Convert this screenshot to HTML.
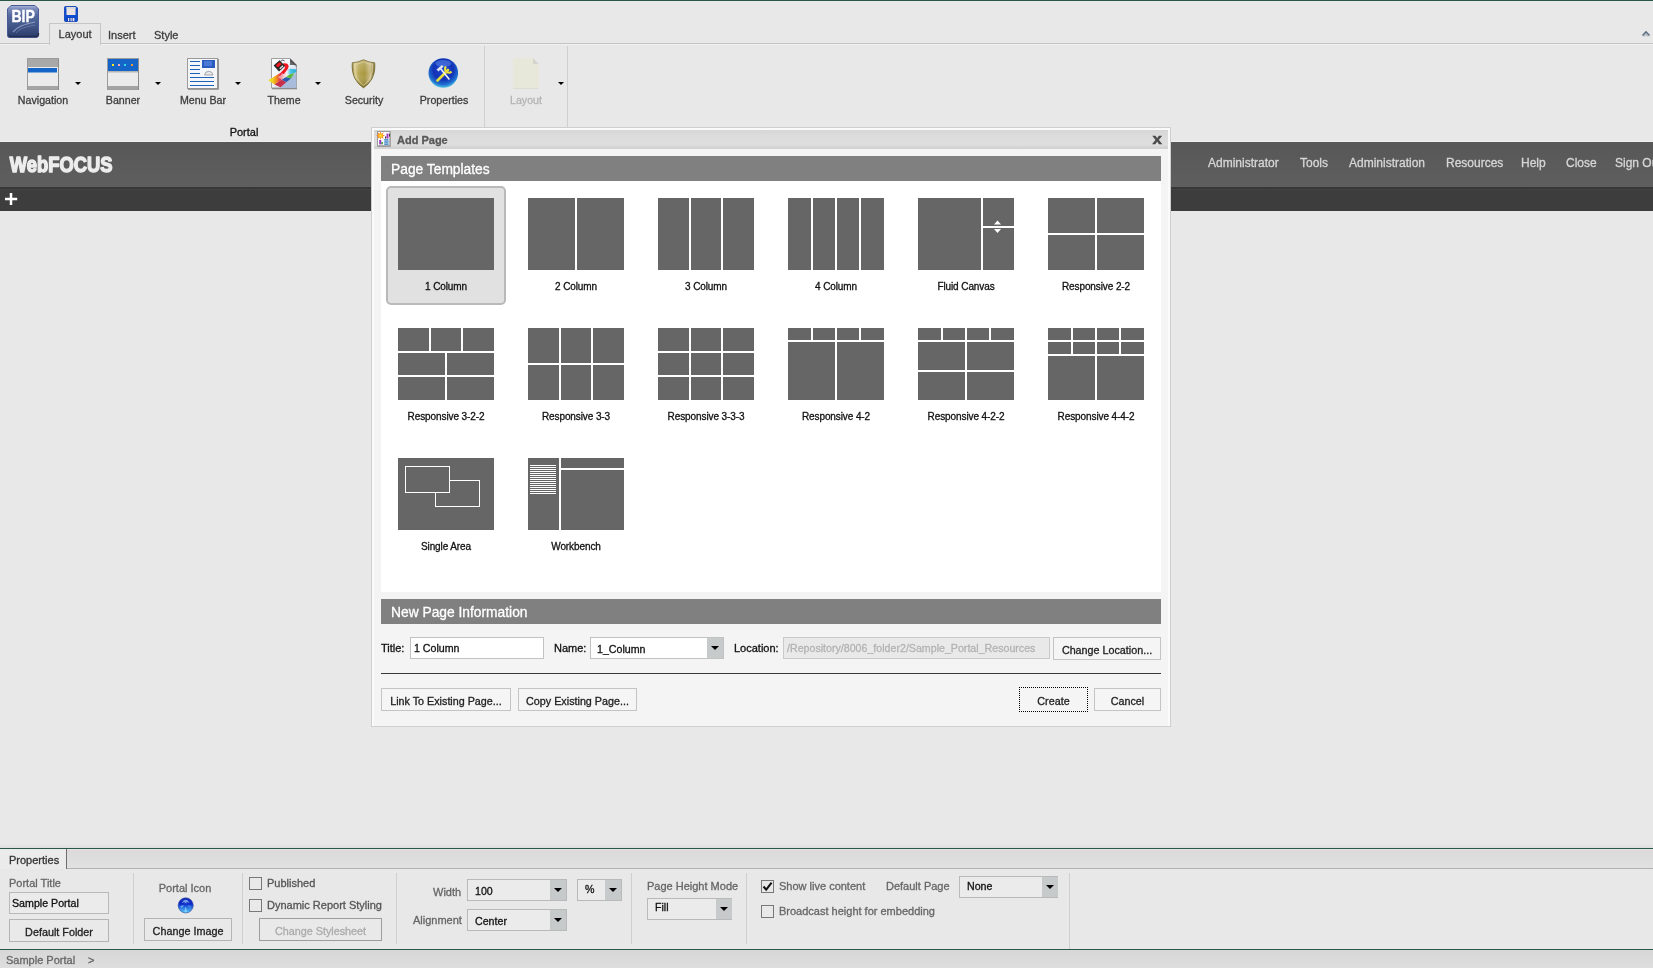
<!DOCTYPE html>
<html>
<head>
<meta charset="utf-8">
<title>Add Page</title>
<style>
*{box-sizing:border-box;margin:0;padding:0}
html,body{width:1653px;height:968px;overflow:hidden}
body{position:relative;background:#e8e8e8;font-family:"Liberation Sans",sans-serif;font-size:11px;color:#333;line-height:13px;-webkit-text-stroke:0.3px}
.a{position:absolute;white-space:nowrap}
.c{text-align:center}
/* ribbon */
#topline{left:0;top:0;width:1653px;height:1px;background:#2b5747}
#tabline{left:0;top:43px;width:1653px;height:1px;background:#c3c3c3}
#tabline2{left:0;top:44px;width:1653px;height:1px;background:#f2f2f2}
#tab{left:49px;top:23px;width:52px;height:22px;border:1px solid #c6c6c6;border-bottom:none;background:#e8e8e8}
.rl{top:94px;height:13px;color:#3c3c3c;font-size:10.65px}
.arr{width:0;height:0;border-left:3px solid transparent;border-right:3px solid transparent;border-top:3px solid #000}
.vsep{width:1px;background:#cfcfcf}
.vsep2{width:1px;background:#f4f4f4}
/* banner */
#banner{left:0;top:142px;width:1653px;height:45px;background:linear-gradient(#575757,#5f5f5f)}
#bar{left:0;top:187px;width:1653px;height:24px;background:linear-gradient(#383838 0,#383838 2px,#414141 2px,#414141 3px,#3d3d3d 3px)}
.bl{top:156px;font-size:12px;color:#d6d6d6;line-height:14px}
/* dialog */
#dlg{left:371px;top:127px;width:800px;height:600px;background:#f4f4f4;border:1px solid #cfcfcf}
#dtitle{left:374px;top:130px;width:794px;height:19px;background:linear-gradient(#d6d6d6 0,#dcdcdc 30%,#dedede 80%,#d3d3d3 90%,#d3d3d3 100%)}
.hdr{left:381px;width:780px;height:25px;background:#808080;color:#fff;font-size:13.8px;line-height:27px;padding-left:10px}
#tarea{left:381px;top:181px;width:780px;height:411px;background:#fff}
.th{width:96px;height:72px;background:#fff}
.th i{position:absolute;background:#666;display:block}
.tl{width:130px;font-size:10px;color:#111;text-align:center;line-height:12px;letter-spacing:-0.1px}
.btn{border:1px solid #c4c4c4;background:#f5f5f5;color:#222;text-align:center;line-height:24px;height:23px;font-size:10.75px}
.inp{border:1px solid #c2c2c2;background:#fff;height:22px;line-height:20px;color:#111;padding-left:3px;font-size:10.65px}
.dd{width:16px;background:#c6caca}
.dd:after{content:"";position:absolute;left:4px;top:8px;border-left:4px solid transparent;border-right:4px solid transparent;border-top:4px solid #000}
/* props */
.pl{color:#666}
.cb{width:13px;height:13px;border:1px solid #787878;background:#e9e9e9}
.pbtn{border:1px solid #b4b4b4;background:#e9e9e9;color:#222;text-align:center;line-height:21px;height:23px;font-size:10.8px}
.pinp{border:1px solid #b9b9b9;background:#ebebeb;height:22px;line-height:20px;color:#111;font-size:10.65px}
</style>
</head>
<body>
<div id="root" style="position:absolute;left:0;top:0;width:1653px;height:968px;will-change:transform">
<!-- RIBBON -->
<div class="a" id="topline"></div>
<div class="a" id="tabline"></div>
<div class="a" id="tabline2"></div>
<div class="a" id="tab"></div>
<div class="a" style="left:58.6px;top:28px;color:#3c3c3c">Layout</div>
<div class="a" style="left:108px;top:29px;color:#3c3c3c">Insert</div>
<div class="a" style="left:154px;top:29px;color:#3c3c3c">Style</div>
<!--ICONS-TOP-->
<!--RIBBON-ICONS-->
<svg class="a" style="left:0;top:0" width="600" height="128" viewBox="0 0 600 128">
<defs>
<linearGradient id="gbip" x1="0" y1="0" x2="0" y2="1"><stop offset="0" stop-color="#a9b5d8"/><stop offset="0.1" stop-color="#7d8dbd"/><stop offset="0.3" stop-color="#566a9f"/><stop offset="0.6" stop-color="#44598b"/><stop offset="1" stop-color="#2b3c69"/></linearGradient>
<linearGradient id="gsh" x1="0" y1="0" x2="1" y2="0"><stop offset="0" stop-color="#7c6c22"/><stop offset="0.12" stop-color="#d8cc8c"/><stop offset="0.3" stop-color="#b5a450"/><stop offset="0.55" stop-color="#a8973f"/><stop offset="0.8" stop-color="#cbbb86"/><stop offset="1" stop-color="#6e5f1e"/></linearGradient>
<linearGradient id="gsh2" x1="0" y1="0" x2="0" y2="1"><stop offset="0" stop-color="#fff" stop-opacity="0.25"/><stop offset="0.5" stop-color="#fff" stop-opacity="0"/><stop offset="1" stop-color="#3a2c00" stop-opacity="0.35"/></linearGradient>
<radialGradient id="ggl" cx="0.5" cy="0.38" r="0.62"><stop offset="0" stop-color="#1a45d8"/><stop offset="0.55" stop-color="#1432b4"/><stop offset="0.82" stop-color="#1e6ed0"/><stop offset="1" stop-color="#52c6e6"/></radialGradient>
<linearGradient id="gth" x1="0" y1="0" x2="1" y2="0"><stop offset="0" stop-color="#e4e428"/><stop offset="0.16" stop-color="#f0d020"/><stop offset="0.3" stop-color="#f08a20"/><stop offset="0.44" stop-color="#ea2850"/><stop offset="0.56" stop-color="#f4a0c0"/><stop offset="0.66" stop-color="#f6f6f6"/><stop offset="0.8" stop-color="#48c4e4"/><stop offset="1" stop-color="#28b0dc"/></linearGradient>
<linearGradient id="gpg" x1="0" y1="0" x2="1" y2="1"><stop offset="0" stop-color="#fff"/><stop offset="0.5" stop-color="#eef2f8"/><stop offset="1" stop-color="#9db4d8"/></linearGradient>
</defs>
<!-- BIP -->
<path d="M11 5.5 H35 L38.5 9 V35 Q38.5 37.5 36 37.5 H9.5 Q7.5 37.5 7.5 35.5 V9 Z" fill="url(#gbip)" stroke="#4a5a96" stroke-width="1"/>
<path d="M9 36.5 H36 Q38.5 36.5 38.5 33" fill="none" stroke="#1f2a4a" stroke-width="1.6" opacity="0.8"/>
<path d="M13 32 C18 26 24 24.5 35 22" fill="none" stroke="#a9b8dc" stroke-width="1.2" opacity="0.7"/>
<path d="M16 33 C20 28 26 27 35 25" fill="none" stroke="#8fa2cc" stroke-width="0.8" opacity="0.5"/>
<text x="23.2" y="22.4" font-family="Liberation Sans" font-weight="bold" font-size="17" fill="#fff" text-anchor="middle" textLength="23.5" lengthAdjust="spacingAndGlyphs" stroke="#fff" stroke-width="0.4">BIP</text>
<!-- save -->
<path d="M64.5 7.5 Q64.5 6.5 65.5 6.5 H76 L77.5 8 V20.5 Q77.5 21.5 76.5 21.5 H65.5 Q64.5 21.5 64.5 20.5 Z" fill="#0c4fd4" stroke="#0a3aa8" stroke-width="0.8"/>
<rect x="66.5" y="7" width="9" height="8" fill="#ece4e0"/>
<rect x="66.5" y="7" width="9" height="2" fill="#d8d8dc"/>
<rect x="67" y="17.5" width="8" height="4" fill="#1a3fb0"/>
<rect x="68" y="18" width="1.2" height="3.2" fill="#e8e8f0"/><rect x="70.5" y="18" width="1.2" height="3.2" fill="#e8e8f0"/><rect x="72.6" y="18" width="1.8" height="3.2" fill="#e8e8f0"/>
<!-- navigation -->
<rect x="27.5" y="58.5" width="31" height="31" fill="#ebebeb" stroke="#9b9b9b"/>
<rect x="28" y="59" width="30" height="8" fill="#a9a9a9"/>
<rect x="28" y="68" width="29" height="4.5" fill="#1565c8"/>
<rect x="28" y="86" width="30" height="3.5" fill="#a4a4a4"/>
<rect x="58" y="59" width="1" height="31" fill="#8c8c8c"/>
<!-- banner -->
<rect x="107.5" y="58.5" width="31" height="31" fill="#ebebeb" stroke="#9b9b9b"/>
<rect x="108" y="59" width="30" height="12" fill="#1565c8"/>
<rect x="108" y="71" width="30" height="1.5" fill="#b5b5b5"/>
<rect x="108" y="86" width="30" height="3.5" fill="#a4a4a4"/>
<rect x="138" y="59" width="1" height="31" fill="#8c8c8c"/>
<rect x="112" y="64" width="2" height="2" fill="#ffe820"/><rect x="118" y="64" width="2" height="2" fill="#f0a8c0"/><rect x="124" y="64" width="2" height="2" fill="#30d8e8"/><rect x="131" y="64" width="2" height="2" fill="#f09830"/>
<!-- menubar -->
<rect x="187.5" y="58.5" width="30" height="30" fill="#f4f6fa" stroke="#9a9a9a"/>
<rect x="188" y="88.5" width="30.5" height="1.3" fill="#8a8a8a"/><rect x="217.7" y="59" width="1.2" height="30" fill="#8a8a8a"/>
<g fill="#1c62b8"><rect x="190" y="61" width="10" height="1"/><rect x="190" y="65" width="10" height="1"/><rect x="190" y="69" width="10" height="1"/><rect x="190" y="73" width="10" height="1"/><rect x="190" y="77" width="24" height="1"/><rect x="190" y="81" width="24" height="1"/><rect x="190" y="85" width="24" height="1"/></g>
<rect x="202" y="60" width="13" height="8" fill="#2a5cc0"/><rect x="204" y="61" width="8" height="5" fill="#4a78d4"/>
<path d="M204.5 75 A4.3 4.3 0 0 1 213 75 Z" fill="#e8eaec" stroke="#a4a4a4" stroke-width="1"/>
<!-- theme -->
<path d="M271.5 58.5 H290 L296.5 65 V88 H271.5 Z" fill="url(#gpg)" stroke="#a0a0a0"/>
<path d="M290 58.5 V65 H296.5 Z" fill="#6a6a6a"/><path d="M290 58.5 L296.5 65 V67 L290 61 Z" fill="#333" opacity="0.5"/>
<rect x="272" y="88" width="25" height="1.3" fill="#8c8c8c"/>
<path d="M280 87 L296.3 72.5 V87.7 H280 Z" fill="#a9bcdc"/>
<path d="M268.3 80.3 L286 69.6 Q291 67.8 296.3 69.6 L296.3 72.2 L289.5 74.6 L274.5 84.4 Z" fill="url(#gth)"/>
<path d="M274.5 84.4 L281.5 79.8 L286.5 82 L280.5 87.2 Z" fill="#c8304c"/>
<path d="M281.5 79.8 L286 76.9 L291 78.4 L286.5 82 Z" fill="#2c5cb0"/>
<path d="M286 76.9 L289.5 74.6 L294.5 73 L291 78.4 Z" fill="#5cb83c"/>
<path d="M278 77 L283.5 73.6 L289.5 74.6 L286 76.9 L281.5 79.8 Z" fill="#f4f0e0" opacity="0.55"/>
<path d="M283 63.6 C288.4 62.4 290 66.2 287.4 69.6 L283.8 74 L280.8 72.4 L284.6 68.4 C285.6 66.6 284.6 65.4 282.2 66 Z" fill="#f01820"/>
<path d="M273.6 65.4 L279.6 60.2 L285 66 L279 71.6 Z" fill="#262626"/>
<path d="M275.8 65.2 L279.6 62 L281.6 64.2 L277.8 67.6 Z" fill="#f01820"/><path d="M279.3 68.2 L282.6 65.2 L283.5 66.2 L280.2 69.3 Z" fill="#e8e8e8"/>
<path d="M280.4 61.4 Q283 58.8 284.6 61" fill="none" stroke="#555" stroke-width="1"/>
<!-- security -->
<path d="M352.3 62.8 Q358 62.6 363.5 59.8 Q369 62.6 374.7 62.8 Q375.5 72 371.8 79 Q368.8 84.5 363.5 87.8 Q358.2 84.5 355.2 79 Q351.5 72 352.3 62.8 Z" fill="url(#gsh)" stroke="#6a5a18" stroke-width="0.8"/>
<path d="M352.3 62.8 Q358 62.6 363.5 59.8 Q369 62.6 374.7 62.8 Q375.5 72 371.8 79 Q368.8 84.5 363.5 87.8 Q358.2 84.5 355.2 79 Q351.5 72 352.3 62.8 Z" fill="url(#gsh2)"/>
<path d="M354.3 64.4 Q359 64 363.5 61.8 Q368 64 372.7 64.4 Q373.2 72 370 78 Q367.5 82.6 363.5 85.4 Q359.5 82.6 357 78 Q353.8 72 354.3 64.4 Z" fill="none" stroke="#e6dcae" stroke-width="0.7" opacity="0.85"/>
<!-- properties -->
<circle cx="443.3" cy="73" r="14.8" fill="url(#ggl)"/>
<ellipse cx="443.3" cy="63.5" rx="8" ry="3.5" fill="#6a9cf0" opacity="0.45"/>
<path d="M437.5 80.5 L448 70" stroke="#e6dc3a" stroke-width="2.6" stroke-linecap="round"/>
<path d="M446 66.5 A3.6 3.6 0 1 0 451.5 71.5" fill="none" stroke="#e6dc3a" stroke-width="2.3"/>
<path d="M440 68 L449 79" stroke="#eef0f4" stroke-width="1.6" stroke-linecap="round"/>
<path d="M436.5 69.5 L442 65 L443.5 66.8 L438.5 71.5 Z" fill="#dfe2ea"/>
<!-- layout disabled -->
<path d="M513 58 H533 L538.5 64 V88 H513 Z" fill="#e7e7da"/>
<path d="M533 58 V64 H538.5 Z" fill="#d4d4cc"/>
<rect x="513" y="88" width="25.5" height="1" fill="#dcdcd4"/>
</svg>
<svg class="a" style="left:1641px;top:30px" width="10" height="8" viewBox="0 0 10 8"><path d="M1.5 5.5 L5 2 L8.5 5.5" fill="none" stroke="#5d6f82" stroke-width="1.6"/><path d="M3 6.5 L5 4.5 L7 6.5" fill="none" stroke="#8a98a6" stroke-width="1"/></svg>

<!--/RIBBON-ICONS-->
<div class="a rl c" style="left:3px;width:80px">Navigation</div>
<div class="a rl c" style="left:83px;width:80px">Banner</div>
<div class="a rl c" style="left:163px;width:80px">Menu Bar</div>
<div class="a rl c" style="left:244px;width:80px">Theme</div>
<div class="a rl c" style="left:324px;width:80px">Security</div>
<div class="a rl c" style="left:404px;width:80px">Properties</div>
<div class="a rl c" style="left:486px;width:80px;color:#b4b4b4">Layout</div>
<div class="a arr" style="left:75px;top:82px"></div>
<div class="a arr" style="left:155px;top:82px"></div>
<div class="a arr" style="left:235px;top:82px"></div>
<div class="a arr" style="left:315px;top:82px"></div>
<div class="a arr" style="left:558px;top:82px"></div>
<div class="a c" style="left:204px;top:126px;width:80px;color:#111">Portal</div>
<div class="a vsep" style="left:484px;top:46px;height:81px"></div>
<div class="a vsep" style="left:567px;top:46px;height:81px"></div>
<!-- BANNER -->
<div class="a" style="left:0;top:141px;width:1653px;height:1px;background:#f0f0f0"></div>
<div class="a" id="banner"></div>
<div class="a" id="bar"></div>
<svg class="a" style="left:0;top:142px" width="130" height="44" viewBox="0 0 130 44"><text x="9.8" y="30.1" font-family="Liberation Sans" font-weight="bold" font-size="22" fill="#ededed" stroke="#ededed" stroke-width="1.5" stroke-linejoin="round" textLength="102.6" lengthAdjust="spacingAndGlyphs">WebFOCUS</text></svg>
<div class="a bl" style="left:1208px">Administrator</div>
<div class="a bl" style="left:1300px">Tools</div>
<div class="a bl" style="left:1349px">Administration</div>
<div class="a bl" style="left:1446px">Resources</div>
<div class="a bl" style="left:1521px">Help</div>
<div class="a bl" style="left:1566px">Close</div>
<div class="a bl" style="left:1615px">Sign Out</div>
<svg class="a" style="left:4px;top:192px" width="14" height="14" viewBox="0 0 14 14"><path d="M1 7 H13.2 M7 1 V13" stroke="#fff" stroke-width="2.5" fill="none"/></svg>
<!--DIALOG-->
<div class="a" id="dlg"></div>
<div class="a" style="left:372px;top:128px;width:798px;height:598px;border:2px solid #fafafa;border-bottom:none"></div>
<div class="a" id="dtitle"></div>
<svg class="a" style="left:376px;top:130px" width="16" height="18" viewBox="0 0 16 18"><defs><radialGradient id="gsun" cx="0.5" cy="0.5" r="0.5"><stop offset="0" stop-color="#ffe640"/><stop offset="0.5" stop-color="#ffa81c"/><stop offset="1" stop-color="#f0501c"/></radialGradient></defs>
<rect x="1.5" y="1.5" width="12.5" height="14.5" fill="#fdfdfd" stroke="#9a9a9a"/><rect x="2" y="15.5" width="12.5" height="1.2" fill="#8e8e8e"/><rect x="13.6" y="2" width="1.1" height="14" fill="#9a9a9a"/>
<path d="M4.5 1.5 L5.4 3.8 L7.6 2.4 L6.8 4.8 L9 5.6 L6.8 6.4 L7.6 8.8 L5.4 7.4 L4.5 9.8 L3.6 7.4 L1.4 8.8 L2.2 6.4 L0.2 5.6 L2.2 4.8 L1.4 2.4 L3.6 3.8 Z" fill="url(#gsun)"/>
<rect x="10.5" y="3.5" width="2" height="5" fill="#a838c8"/><rect x="9" y="6.5" width="1.3" height="2" fill="#4a3a2a"/><rect x="13" y="4" width="1" height="2.5" fill="#4a3a2a"/>
<rect x="3.2" y="10" width="2" height="4.4" fill="#9a30c0"/><rect x="5.4" y="12" width="1.4" height="2.4" fill="#2a8a28"/>
<rect x="8.2" y="9.3" width="4.4" height="1.2" fill="#0c68b8"/><rect x="8.2" y="11.4" width="4.4" height="1.2" fill="#0c68b8"/><rect x="8.2" y="13.5" width="4.4" height="1.2" fill="#0c68b8"/>
</svg>
<div class="a" style="left:397px;top:134px;font-weight:bold;color:#585858">Add Page</div>
<svg class="a" style="left:1150px;top:132px" width="16" height="16" viewBox="0 0 16 16"><text x="2.6" y="11.9" font-family="Liberation Sans" font-weight="bold" font-size="15.3" fill="#4a4a4a" stroke="#4a4a4a" stroke-width="0.5" textLength="9.4" lengthAdjust="spacingAndGlyphs">x</text></svg>
<div class="a hdr" style="top:156px">Page Templates</div>
<div class="a" id="tarea"></div>
<div class="a" style="left:386px;top:186px;width:120px;height:119px;border:2px solid #b9b9b9;border-radius:5px;background:#e1e1e1"></div>
<div class="a th" style="left:398px;top:198px;background:#e1e1e1"><i style="left:0px;top:0px;width:96px;height:72px"></i></div>
<div class="a tl" style="left:381px;top:281px">1 Column</div>
<div class="a th" style="left:528px;top:198px;background:#fff"><i style="left:0px;top:0px;width:47px;height:72px"></i><i style="left:49px;top:0px;width:47px;height:72px"></i></div>
<div class="a tl" style="left:511px;top:281px">2 Column</div>
<div class="a th" style="left:658px;top:198px;background:#fff"><i style="left:0px;top:0px;width:31px;height:72px"></i><i style="left:33px;top:0px;width:30px;height:72px"></i><i style="left:65px;top:0px;width:31px;height:72px"></i></div>
<div class="a tl" style="left:641px;top:281px">3 Column</div>
<div class="a th" style="left:788px;top:198px;background:#fff"><i style="left:0px;top:0px;width:23px;height:72px"></i><i style="left:25px;top:0px;width:22px;height:72px"></i><i style="left:49px;top:0px;width:22px;height:72px"></i><i style="left:73px;top:0px;width:23px;height:72px"></i></div>
<div class="a tl" style="left:771px;top:281px">4 Column</div>
<div class="a th" style="left:918px;top:198px;background:#fff"><i style="left:0px;top:0px;width:63px;height:72px"></i><i style="left:65px;top:0px;width:31px;height:28px"></i><i style="left:65px;top:30px;width:31px;height:42px"></i><svg style="position:absolute;left:75px;top:22px" width="9" height="14" viewBox="0 0 9 14"><path d="M4.5 0.6 L8 4.6 L1 4.6 Z M1 9 L8 9 L4.5 13 Z" fill="#fff"/></svg></div>
<div class="a tl" style="left:901px;top:281px">Fluid Canvas</div>
<div class="a th" style="left:1048px;top:198px;background:#fff"><i style="left:0px;top:0px;width:47px;height:35px"></i><i style="left:49px;top:0px;width:47px;height:35px"></i><i style="left:0px;top:37px;width:47px;height:35px"></i><i style="left:49px;top:37px;width:47px;height:35px"></i></div>
<div class="a tl" style="left:1031px;top:281px">Responsive 2-2</div>
<div class="a th" style="left:398px;top:328px;background:#fff"><i style="left:0px;top:0px;width:31px;height:23px"></i><i style="left:33px;top:0px;width:30px;height:23px"></i><i style="left:65px;top:0px;width:31px;height:23px"></i><i style="left:0px;top:25px;width:47px;height:22px"></i><i style="left:49px;top:25px;width:47px;height:22px"></i><i style="left:0px;top:49px;width:47px;height:23px"></i><i style="left:49px;top:49px;width:47px;height:23px"></i></div>
<div class="a tl" style="left:381px;top:411px">Responsive 3-2-2</div>
<div class="a th" style="left:528px;top:328px;background:#fff"><i style="left:0px;top:0px;width:31px;height:35px"></i><i style="left:33px;top:0px;width:30px;height:35px"></i><i style="left:65px;top:0px;width:31px;height:35px"></i><i style="left:0px;top:37px;width:31px;height:35px"></i><i style="left:33px;top:37px;width:30px;height:35px"></i><i style="left:65px;top:37px;width:31px;height:35px"></i></div>
<div class="a tl" style="left:511px;top:411px">Responsive 3-3</div>
<div class="a th" style="left:658px;top:328px;background:#fff"><i style="left:0px;top:0px;width:31px;height:23px"></i><i style="left:33px;top:0px;width:30px;height:23px"></i><i style="left:65px;top:0px;width:31px;height:23px"></i><i style="left:0px;top:25px;width:31px;height:22px"></i><i style="left:33px;top:25px;width:30px;height:22px"></i><i style="left:65px;top:25px;width:31px;height:22px"></i><i style="left:0px;top:49px;width:31px;height:23px"></i><i style="left:33px;top:49px;width:30px;height:23px"></i><i style="left:65px;top:49px;width:31px;height:23px"></i></div>
<div class="a tl" style="left:641px;top:411px">Responsive 3-3-3</div>
<div class="a th" style="left:788px;top:328px;background:#fff"><i style="left:0px;top:0px;width:23px;height:12px"></i><i style="left:25px;top:0px;width:22px;height:12px"></i><i style="left:49px;top:0px;width:22px;height:12px"></i><i style="left:73px;top:0px;width:23px;height:12px"></i><i style="left:0px;top:14px;width:47px;height:58px"></i><i style="left:49px;top:14px;width:47px;height:58px"></i></div>
<div class="a tl" style="left:771px;top:411px">Responsive 4-2</div>
<div class="a th" style="left:918px;top:328px;background:#fff"><i style="left:0px;top:0px;width:23px;height:12px"></i><i style="left:25px;top:0px;width:22px;height:12px"></i><i style="left:49px;top:0px;width:22px;height:12px"></i><i style="left:73px;top:0px;width:23px;height:12px"></i><i style="left:0px;top:14px;width:47px;height:28px"></i><i style="left:49px;top:14px;width:47px;height:28px"></i><i style="left:0px;top:44px;width:47px;height:28px"></i><i style="left:49px;top:44px;width:47px;height:28px"></i></div>
<div class="a tl" style="left:901px;top:411px">Responsive 4-2-2</div>
<div class="a th" style="left:1048px;top:328px;background:#fff"><i style="left:0px;top:0px;width:23px;height:12px"></i><i style="left:25px;top:0px;width:22px;height:12px"></i><i style="left:49px;top:0px;width:22px;height:12px"></i><i style="left:73px;top:0px;width:23px;height:12px"></i><i style="left:0px;top:14px;width:23px;height:12px"></i><i style="left:25px;top:14px;width:22px;height:12px"></i><i style="left:49px;top:14px;width:22px;height:12px"></i><i style="left:73px;top:14px;width:23px;height:12px"></i><i style="left:0px;top:28px;width:47px;height:44px"></i><i style="left:49px;top:28px;width:47px;height:44px"></i></div>
<div class="a tl" style="left:1031px;top:411px">Responsive 4-4-2</div>
<div class="a th" style="left:398px;top:458px;background:#fff"><i style="left:0px;top:0px;width:96px;height:72px"></i><b style="position:absolute;left:37px;top:22px;width:45px;height:27px;border:1px solid #fff"></b><b style="position:absolute;left:7px;top:8px;width:45px;height:27px;border:1px solid #fff;background:#666"></b></div>
<div class="a tl" style="left:381px;top:541px">Single Area</div>
<div class="a th" style="left:528px;top:458px;background:#fff"><i style="left:0px;top:0px;width:31px;height:72px"></i><i style="left:33px;top:0px;width:63px;height:10px"></i><i style="left:33px;top:12px;width:63px;height:60px"></i><b style="position:absolute;left:2px;top:7px;width:26px;height:29px;background:repeating-linear-gradient(#fff 0,#fff 1px,#666 1px,#666 2px)"></b></div>
<div class="a tl" style="left:511px;top:541px">Workbench</div>
<div class="a hdr" style="top:599px">New Page Information</div>
<div class="a" style="left:381px;top:642px;color:#111">Title:</div>
<div class="a inp" style="left:410px;top:637px;width:134px">1 Column</div>
<div class="a" style="left:554px;top:642px;color:#111">Name:</div>
<div class="a inp" style="left:590px;top:637px;width:134px;padding-left:6px;line-height:22px">1_Column</div>
<div class="a dd" style="left:707px;top:638px;height:20px"></div>
<div class="a" style="left:734px;top:642px;color:#111">Location:</div>
<div class="a inp" style="left:783px;top:637px;width:267px;background:#e9e9e9;border-color:#cacaca;color:#b3b3b3">/Repository/8006_folder2/Sample_Portal_Resources</div>
<div class="a btn" style="left:1053px;top:637px;width:108px;line-height:25px">Change Location...</div>
<div class="a" style="left:381px;top:673px;width:780px;height:1px;background:#3a3a3a"></div>
<div class="a btn" style="left:381px;top:688px;width:130px">Link To Existing Page...</div>
<div class="a btn" style="left:518px;top:688px;width:119px">Copy Existing Page...</div>
<div class="a btn" style="left:1019px;top:687px;width:69px;height:25px;border:1px dotted #000;line-height:26px">Create</div>
<div class="a btn" style="left:1094px;top:688px;width:67px">Cancel</div>
<!--/DIALOG-->
<!--PROPS-->
<div class="a" style="left:0;top:848px;width:1653px;height:1px;background:#2b5747"></div>
<div class="a" style="left:0;top:844px;width:1653px;height:4px;background:linear-gradient(#e8e8e8,#dedede)"></div>
<div class="a" style="left:0;top:849px;width:1653px;height:20px;background:linear-gradient(#e0e4e3 0,#e0e4e3 1px,#dfd9db 1px,#dfd9db 3px,#dbdbdb 3px,#e1e1e1 100%);border-bottom:1px solid #b2b2b2"></div>
<div class="a" style="left:0;top:849px;width:67px;height:20px;background:#ebebeb;border-right:1px solid #6e6e6e"></div>
<div class="a" style="left:9px;top:854px;color:#333">Properties</div>
<div class="a pl" style="left:9px;top:877px">Portal Title</div>
<div class="a pinp" style="left:9px;top:892px;width:100px;padding-left:2px">Sample Portal</div>
<div class="a pbtn" style="left:9px;top:919px;width:100px;line-height:25px">Default Folder</div>
<div class="a vsep" style="left:133px;top:873px;height:71px"></div>
<div class="a pl c" style="left:145px;top:882px;width:80px">Portal Icon</div>
<svg class="a" style="left:177px;top:897px" width="18" height="18" viewBox="0 0 18 18"><defs><linearGradient id="gg2" x1="0" y1="0" x2="0" y2="1"><stop offset="0" stop-color="#1830b8"/><stop offset="0.4" stop-color="#0c28c8"/><stop offset="0.62" stop-color="#2a6ee0"/><stop offset="1" stop-color="#56c8f2"/></linearGradient></defs>
<circle cx="8.7" cy="8.4" r="7.6" fill="url(#gg2)" stroke="#2a3a8a" stroke-width="0.5"/>
<path d="M4.6 6.2 Q8.7 -0.5 12.8 6.2 Q8.7 3.6 4.6 6.2 Z" fill="#8ab4f2" opacity="0.85"/><path d="M7.2 6.6 Q8.7 3.6 10.2 6.6 Q8.7 5.6 7.2 6.6Z" fill="#9cc8f4" opacity="0.9"/>
<path d="M3.2 9.2 L7 8 L5 11 Z" fill="#7ab4f8" opacity="0.85"/><path d="M14.2 9.2 L10.4 8 L12.4 11 Z" fill="#4a90f0" opacity="0.8"/>
<path d="M8.7 9.5 L10.2 15 L7.2 15 Z" fill="#80d0ff" opacity="0.9"/>
</svg>
<div class="a pbtn" style="left:144px;top:918px;width:88px;line-height:25px">Change Image</div>
<div class="a vsep" style="left:242px;top:873px;height:71px"></div>
<div class="a cb" style="left:249px;top:877px"></div>
<div class="a pl" style="left:267px;top:877px;color:#555">Published</div>
<div class="a cb" style="left:249px;top:899px"></div>
<div class="a pl" style="left:267px;top:899px;color:#555">Dynamic Report Styling</div>
<div class="a pbtn" style="left:259px;top:918px;width:123px;line-height:25px;color:#ababab;border-color:#9d9d9d">Change Stylesheet</div>
<div class="a vsep" style="left:396px;top:873px;height:71px"></div>
<div class="a pl" style="left:433px;top:886px">Width</div>
<div class="a pinp" style="left:467px;top:879px;width:100px;padding-left:7px;line-height:22px">100</div>
<div class="a dd" style="left:550px;top:880px;height:20px"></div>
<div class="a pinp" style="left:577px;top:879px;width:45px;padding-left:7px;line-height:18px">%</div>
<div class="a dd" style="left:605px;top:880px;height:20px"></div>
<div class="a pl" style="left:413px;top:914px">Alignment</div>
<div class="a pinp" style="left:467px;top:909px;width:100px;padding-left:7px;line-height:22px">Center</div>
<div class="a dd" style="left:550px;top:910px;height:20px"></div>
<div class="a vsep" style="left:631px;top:873px;height:71px"></div>
<div class="a pl" style="left:647px;top:880px">Page Height Mode</div>
<div class="a pinp" style="left:647px;top:898px;width:85px;padding-left:7px;line-height:17px">Fill</div>
<div class="a dd" style="left:716px;top:899px;height:20px"></div>
<div class="a vsep" style="left:746px;top:873px;height:71px"></div>
<div class="a cb" style="left:761px;top:880px"></div>
<svg class="a" style="left:762px;top:881px" width="11" height="11" viewBox="0 0 11 11"><path d="M1.5 5.5 L4.2 8.6 L9.6 1.6" stroke="#111" stroke-width="2" fill="none"/></svg>
<div class="a pl" style="left:779px;top:880px">Show live content</div>
<div class="a pl" style="left:886px;top:880px">Default Page</div>
<div class="a pinp" style="left:959px;top:876px;width:99px;padding-left:7px;line-height:18px">None</div>
<div class="a dd" style="left:1042px;top:877px;height:20px"></div>
<div class="a cb" style="left:761px;top:905px"></div>
<div class="a pl" style="left:779px;top:905px">Broadcast height for embedding</div>
<div class="a vsep" style="left:1069px;top:873px;height:76px"></div>
<div class="a" style="left:0;top:949px;width:1653px;height:1px;background:#2b5747"></div>
<div class="a" style="left:0;top:950px;width:1653px;height:18px;background:linear-gradient(#d7d7d7,#dedede)"></div>
<div class="a pl" style="left:6px;top:954px">Sample Portal</div>
<div class="a pl" style="left:88px;top:954px">&gt;</div>

<!--/PROPS-->
</div>
</body>
</html>
